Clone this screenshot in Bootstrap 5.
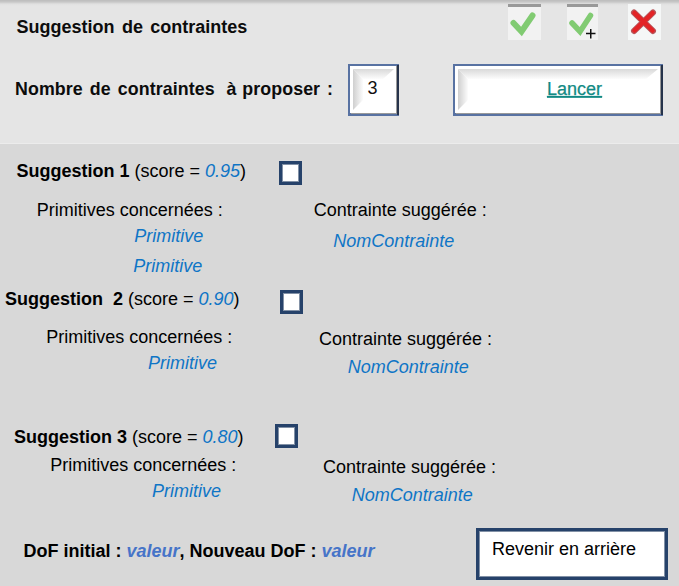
<!DOCTYPE html>
<html lang="fr">
<head>
<meta charset="utf-8">
<meta name="viewport" content="width=device-width, initial-scale=1">
<title>Suggestion de contraintes</title>
<link href="https://cdn.jsdelivr.net/npm/bootstrap@5.3.0/dist/css/bootstrap.min.css" rel="stylesheet">
<style>
body{font:18px/20px "Liberation Sans",Arial,sans-serif;color:#000;background:#d8d8d8;width:679px;height:586px;overflow:hidden}
.panel-top{height:144px;background:linear-gradient(#bcbcbc 0,#c8c8c8 2px,#e0e0e0 4px,#e5e5e5 6px);border-bottom:1px solid #ececec}
.title-row{height:64px;padding:17px 18px 0 16.5px}
.title-text{word-spacing:2.4px;color:#0c0c0c}
.tools{margin-top:-13px}
.tool{border:0;padding:0;background:none;line-height:0}
.count-row{padding-left:15px;color:#0c0c0c}
.count-label{width:333px;padding-top:15px;font-size:17.8px;letter-spacing:.1px;word-spacing:2px;white-space:pre}
.count-tail{word-spacing:.8px}
.count-colon{margin-left:1px}
.number-box{width:51px}
.launch{width:210px;margin-left:54px}
.teal{fill:#128a84;stroke:#128a84;stroke-width:.25px;text-decoration:underline}
.blue{color:#0f75c6;font-style:italic}
.value{color:#4674c8}
.check{appearance:none;width:23px;height:24px;border:3px solid #26426a;outline:1px solid #8291a6;outline-offset:-4px;background:#fff;margin:0;flex:none}
.s1{height:128px;padding:17px 0 0 16.5px}
.s2{height:138px;padding-left:5px;padding-top:17px}
.s3{height:112px;padding:17px 0 0 14px}
.heading{height:20px}
.heading .label{white-space:pre}
.s1 .label{width:262px}.s2 .label{width:275px}.s3 .label{width:261px}
.s2 .check{margin-top:1px}.s3 .check{margin-top:-3px}
.s1 .details{padding:19px 0 0 20.2px}.s2 .details{padding:18px 0 0 41.2px}.s3 .details{padding:8px 0 0 36.2px}
.primitive-col{width:277px}
.s2 .primitive-col,.s3 .primitive-col{width:272.8px}
.s2 .constraint-col,.s3 .constraint-col{padding-top:2px}
.item{padding-left:97.5px;margin-top:6px}
.item + .item{margin-top:10px;padding-left:96.5px}
.s2 .item,.s3 .item{padding-left:101.8px}
.name{padding-left:19.5px;margin-top:11px}
.s2 .name,.s3 .name{padding-left:28.8px;margin-top:8px}
.bottom{padding:6px 11px 0 23.5px}
.dof{padding-top:13px}
.back{width:192px;height:52px;border:3px solid #26426a;outline:1px solid #8291a6;outline-offset:-4px;background:#fff;padding:8px 0 0 13px;text-align:left;line-height:20px}
</style>
</head>
<body>
<header class="panel-top">
  <div class="title-row d-flex justify-content-between align-items-start">
    <div class="title-text fw-bold">Suggestion de contraintes</div>
    <div class="tools d-flex">
      <button class="tool" aria-label="Valider"><svg width="33" height="36"><path fill="#f2f2f2" d="M0 0h33v36H0z"/><path fill="#999" d="M0 0h33v3H0z"/><path d="m5.500 19 8 8.500L24.500 11.500" fill="none" stroke="#81cb72" stroke-width="6" stroke-linecap="round" stroke-linejoin="miter"/></svg></button>
      <button class="tool" aria-label="Valider et ajouter"><svg width="57" height="36" viewBox="-26 0 57 36"><path fill="#f2f2f2" d="M0 0h31v36H0z"/><path fill="#999" d="M0 0h31v3H0z"/><path d="m5 19 8 8.500L23.500 11.500" fill="none" stroke="#81cb72" stroke-width="5.500" stroke-linecap="round" stroke-linejoin="miter"/><path d="M19 29.500h9.500M23.750 25v9.500" stroke="#111" stroke-width="1.500"/></svg></button>
      <button class="tool" aria-label="Annuler"><svg width="63" height="36" viewBox="-30 0 63 36"><path fill="#f5f7f7" d="M0 0h33v36H0z"/><path d="M6 8.500 25 27M25 8.500 6 27" stroke="#b7555a" stroke-width="6" stroke-linecap="round"/><path d="M6.500 9 24.500 26.500M24.500 9 6.500 26.500" stroke="#e32326" stroke-width="4.500" stroke-linecap="round"/></svg></button>
    </div>
  </div>
  <div class="count-row d-flex align-items-start">
    <div class="count-label fw-bold">Nombre de contraintes<span class="count-tail">  à proposer <span class="count-colon">:</span></span></div>
    <svg class="number-box" width="51" height="52" viewBox="0 0 51 52">
      <defs>
        <linearGradient id="down" x2="0" y2="1"><stop stop-color="#d9d9d9"/><stop offset="1" stop-color="#fcfcfc"/></linearGradient>
        <linearGradient id="across"><stop stop-color="#cfcfcf"/><stop offset="1" stop-color="#fcfcfc"/></linearGradient>
      </defs>
      <path fill="#5872a2" d="M0 0h51v52H0z"/><path fill="#26334b" d="M49 1h2v50h-2z"/><path fill="#fff" d="M2 2h46v47H2z"/><path fill="#999" d="M3 49h45v1H3zM48 2h1v48h-1z"/>
      <path fill="url(#down)" d="M5 5h41L35 15H15z"/><path fill="url(#across)" d="M5 5l10 10v21L5 46z"/>
      <text x="19.500" y="30" font-size="18" fill="#111">3</text>
    </svg>
    <a class="launch" href="#"><svg class="d-block" width="210" height="52" viewBox="0 0 210 52">
      <path fill="#5872a2" d="M0 0h210v52H0z"/><path fill="#26334b" d="M208 1h2v50h-2z"/><path fill="#fff" d="M2 2h205v47H2z"/><path fill="#999" d="M3 49h204v1H3zM207 2h1v48h-1z"/>
      <path fill="url(#down)" d="M5 5h200L193 15H15z"/><path fill="url(#across)" d="M5 5l10 10v21L5 46z"/>
      <text class="teal" x="94" y="31" font-size="18">Lancer</text>
    </svg></a>
  </div>
</header>
<main>
  <section class="s1">
    <div class="heading d-flex"><div class="label"><b>Suggestion 1</b> (score = <span class="blue">0.95</span>)</div><input class="check" type="checkbox" aria-label="Suggestion 1"></div>
    <div class="details d-flex">
      <div class="primitive-col"><div>Primitives concernées :</div><div class="item blue">Primitive</div><div class="item blue">Primitive</div></div>
      <div class="constraint-col"><div>Contrainte suggérée :</div><div class="name blue">NomContrainte</div></div>
    </div>
  </section>
  <section class="s2">
    <div class="heading d-flex"><div class="label"><b>Suggestion  2</b> (score = <span class="blue">0.90</span>)</div><input class="check" type="checkbox" aria-label="Suggestion 2"></div>
    <div class="details d-flex">
      <div class="primitive-col"><div>Primitives concernées :</div><div class="item blue">Primitive</div></div>
      <div class="constraint-col"><div>Contrainte suggérée :</div><div class="name blue">NomContrainte</div></div>
    </div>
  </section>
  <section class="s3">
    <div class="heading d-flex"><div class="label"><b>Suggestion 3</b> (score = <span class="blue">0.80</span>)</div><input class="check" type="checkbox" aria-label="Suggestion 3"></div>
    <div class="details d-flex">
      <div class="primitive-col"><div>Primitives concernées :</div><div class="item blue">Primitive</div></div>
      <div class="constraint-col"><div>Contrainte suggérée :</div><div class="name blue">NomContrainte</div></div>
    </div>
  </section>
  <footer class="bottom d-flex justify-content-between align-items-start">
    <div class="dof fw-bold">DoF initial : <i class="value">valeur</i>, Nouveau DoF : <i class="value">valeur</i></div>
    <button class="back d-flex align-items-start">Revenir en arrière</button>
  </footer>
</main>
<script src="https://cdn.jsdelivr.net/npm/bootstrap@5.3.0/dist/js/bootstrap.bundle.min.js"></script>
</body>
</html>
